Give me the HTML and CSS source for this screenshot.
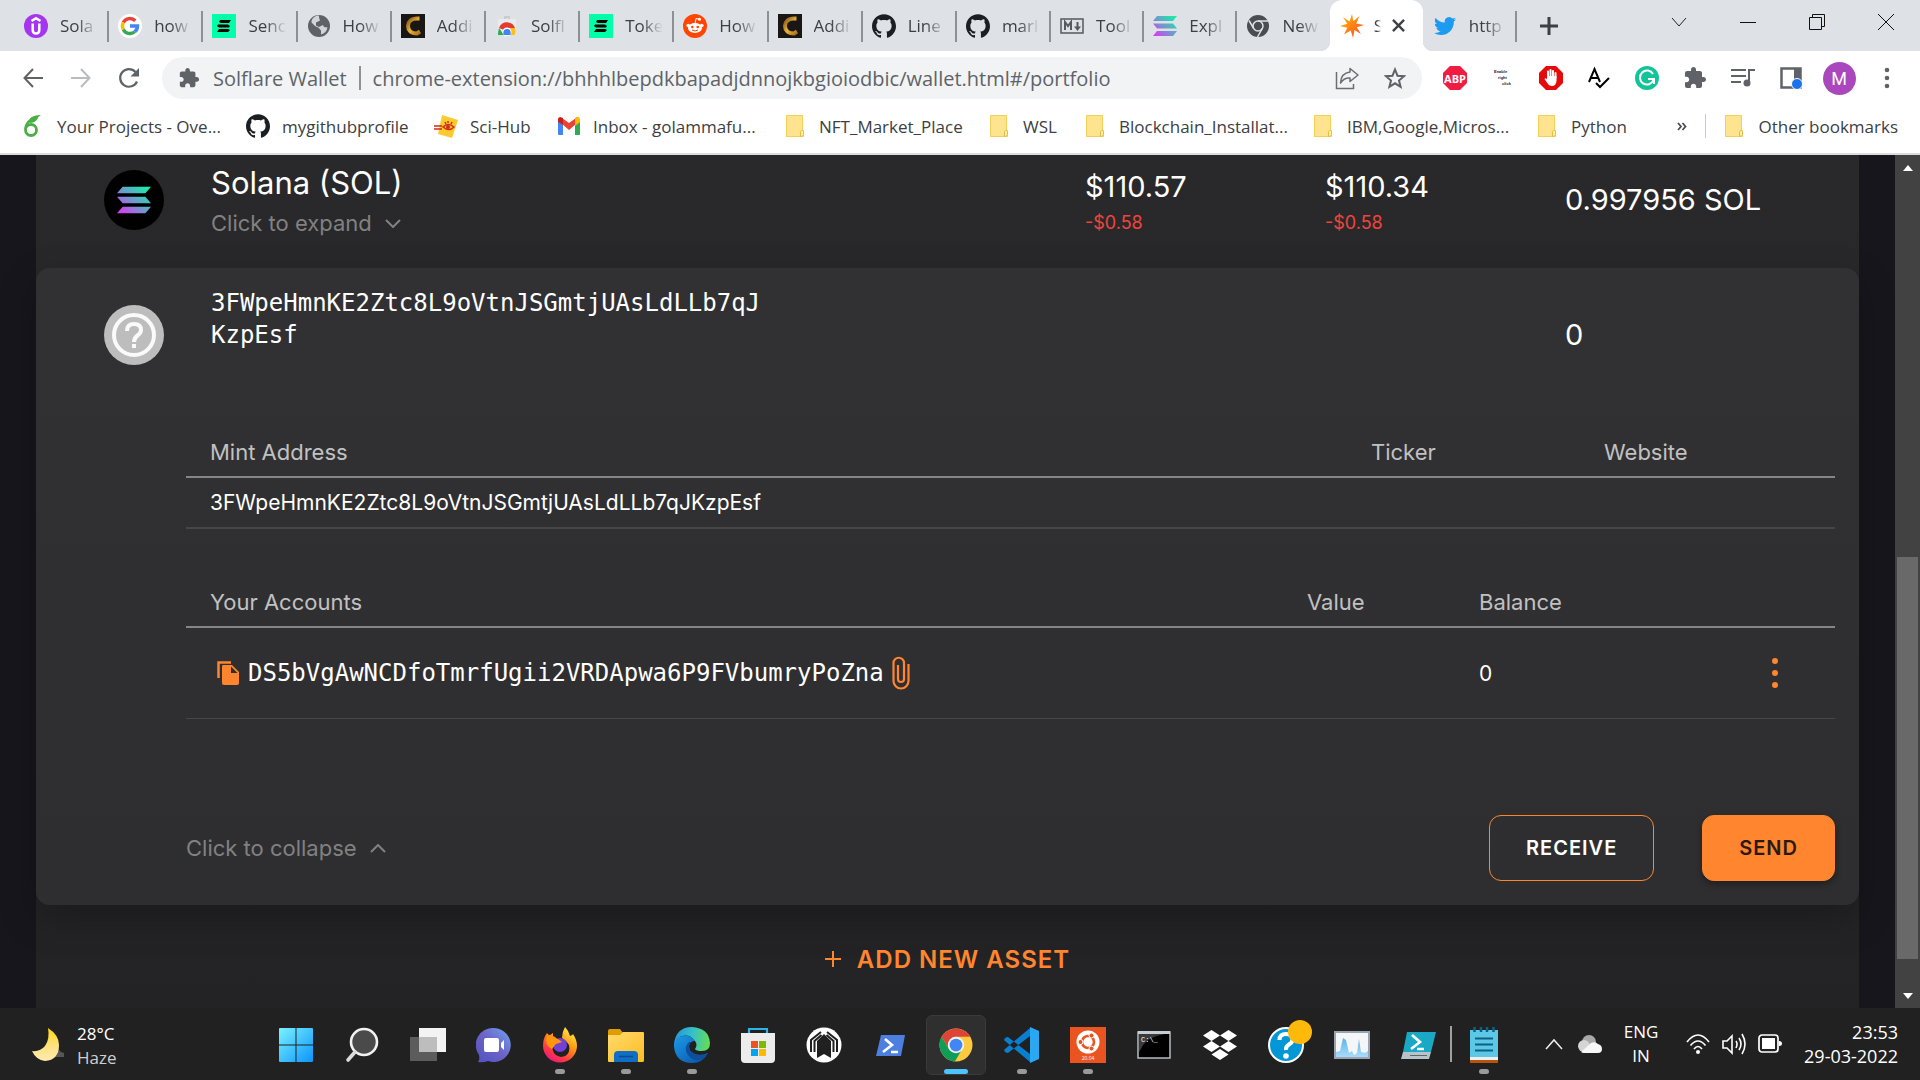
FILE: index.html
```html
<!DOCTYPE html>
<html lang="en">
<head>
<meta charset="utf-8">
<meta name="viewport" content="width=device-width, initial-scale=1">
<title>Solflare Wallet</title>
<link rel="stylesheet" href="styles.css">
</head>
<body>
<svg class="defs" aria-hidden="true">
  <defs>
    <linearGradient id="g-solu" gradientUnits="userSpaceOnUse" x1="3" y1="22" x2="21" y2="2"><stop offset="0" stop-color="#d93cf5"/><stop offset=".5" stop-color="#699fcb"/><stop offset="1" stop-color="#14f0a6"/></linearGradient>
    <linearGradient id="g-gold" x1="0" y1="0" x2="1" y2="1"><stop offset="0" stop-color="#8a5a14"/><stop offset=".5" stop-color="#e8b23c"/><stop offset="1" stop-color="#a8741c"/></linearGradient>
    <linearGradient id="g-win" x1="0" y1="0" x2="1" y2="1"><stop offset="0" stop-color="#7af2ff"/><stop offset="1" stop-color="#0b94fb"/></linearGradient>
    <linearGradient id="g-chat" x1="0" y1="1" x2="1" y2="0"><stop offset="0" stop-color="#4f52c4"/><stop offset=".5" stop-color="#6c62c4"/><stop offset="1" stop-color="#6fa4f4"/></linearGradient>
    <linearGradient id="g-fox" x1=".8" y1="0" x2=".2" y2="1"><stop offset="0" stop-color="#fff44f"/><stop offset=".4" stop-color="#ff980e"/><stop offset=".75" stop-color="#ff3647"/><stop offset="1" stop-color="#e31587"/></linearGradient>
    <linearGradient id="g-folder" x1="0" y1="0" x2="1" y2="1"><stop offset="0" stop-color="#ffda6e"/><stop offset="1" stop-color="#fdbd22"/></linearGradient>
    <linearGradient id="g-edge" x1="0" y1=".4" x2="1" y2=".5"><stop offset="0" stop-color="#2496d8"/><stop offset=".5" stop-color="#35c1c9"/><stop offset="1" stop-color="#66dd52"/></linearGradient>
    <linearGradient id="g-edge2" x1="0" y1="0" x2="1" y2="1"><stop offset="0" stop-color="#1a9ae8"/><stop offset="1" stop-color="#0c50a4"/></linearGradient>
    <linearGradient id="g-moon" x1="0" y1="0" x2="0" y2="1"><stop offset="0" stop-color="#fdd60c"/><stop offset=".5" stop-color="#fde27c"/><stop offset="1" stop-color="#ffe9b0"/></linearGradient>
    <linearGradient id="g-flare" x1="0" y1="0" x2="1" y2="1"><stop offset="0" stop-color="#ffc010"/><stop offset="1" stop-color="#fc4418"/></linearGradient>
    <linearGradient id="g-mon" x1="0" y1="0" x2="0" y2="1"><stop offset="0" stop-color="#5bb4ea"/><stop offset="1" stop-color="#a8dcfa"/></linearGradient>

    <symbol id="i-puzzle" viewBox="0 0 24 24"><path fill="#5f6368" d="M20.500 11H19V7c0-1.100-.9-2-2-2h-4V3.500C13 2.120 11.880 1 10.500 1S8 2.120 8 3.500V5H4c-1.100 0-1.990.9-1.990 2v3.800H3.500c1.490 0 2.700 1.210 2.700 2.700s-1.210 2.700-2.700 2.700H2V20c0 1.100.9 2 2 2h3.800v-1.500c0-1.490 1.210-2.700 2.700-2.700s2.700 1.210 2.700 2.700V22H17c1.100 0 2-.9 2-2v-4h1.500c1.380 0 2.500-1.120 2.500-2.500S21.880 11 20.500 11z"/></symbol>
    <symbol id="i-github" viewBox="0 0 24 24"><path fill="#1b1f23" d="M12 .297c-6.63 0-12 5.373-12 12 0 5.303 3.438 9.8 8.205 11.385.6.113.82-.258.82-.577 0-.285-.01-1.04-.015-2.04-3.338.724-4.042-1.61-4.042-1.61C4.422 18.07 3.633 17.7 3.633 17.7c-1.087-.744.084-.729.084-.729 1.205.084 1.838 1.236 1.838 1.236 1.07 1.835 2.809 1.305 3.495.998.108-.776.417-1.305.76-1.605-2.665-.3-5.466-1.332-5.466-5.93 0-1.31.465-2.38 1.235-3.22-.135-.303-.54-1.523.105-3.176 0 0 1.005-.322 3.3 1.23.96-.267 1.98-.399 3-.405 1.02.006 2.04.138 3 .405 2.28-1.552 3.285-1.23 3.285-1.23.645 1.653.24 2.873.12 3.176.765.84 1.23 1.91 1.23 3.22 0 4.61-2.805 5.625-5.475 5.92.42.36.81 1.096.81 2.22 0 1.606-.015 2.896-.015 3.286 0 .315.21.69.825.57C20.565 22.092 24 17.592 24 12.297c0-6.627-5.373-12-12-12"/></symbol>
    <symbol id="i-bars" viewBox="0 0 24 24"><path fill="#00ffa9" d="M0 0h24v24H0z"/><path d="M8 6h11l-2 3H9L7 8zM6 10.500h10l2 1.500-1 1.500H7L5 12zM7 15h9l2 1-2 2H5z"/></symbol>
    <symbol id="i-gold" viewBox="0 0 24 24"><path fill="#191613" d="M0 0h24v24H0z"/><path fill="none" stroke="url(#g-gold)" stroke-width="4" d="M18.500 4.500H16C10 4.500 7 8 7 12s3 7.500 9 7.500l3-2"/></symbol>
    <symbol id="i-solana" viewBox="0 0 24 24"><g fill="url(#g-solu)"><path d="M4 2h20l-4 5H0zM0 9.500h20l4 5H4zM4 17h20l-4 5H0z"/></g></symbol>
    <symbol id="i-folder" viewBox="0 0 24 24"><path fill="#ffe48f" stroke="#f3cf57" d="M3.500 1.500h16v15h1v6h-17z"/><path fill="#fff0b0" stroke="#e5bd3c" d="M17.500 22.500v-5q2-3 3 0v3q0 2-3 2z"/></symbol>
    <symbol id="i-chrome" viewBox="0 0 48 48"><circle cx="24" cy="24" r="22" fill="#fcca3f"/><path fill="#db4437" d="M5 13a22 22 0 0 1 38 0H24a11 11 0 0 0-10 6z"/><path fill="#0f9d58" d="M5 13a22 22 0 0 0 17.500 33l10-17a11 11 0 0 1-18 0z"/><path fill="#db4437" d="M5 13 14.500 29A11 11 0 0 1 24 13z"/><circle cx="24" cy="24" r="11" fill="#f1f1f1"/><circle cx="24" cy="24" r="8.500" fill="#4285f4"/></symbol>
  </defs>
</svg>

<header class="browser">
  <div class="strip">
    <nav class="tabs" aria-label="Tabs">
      <a class="tab" href="#t1"><svg class="fav" viewBox="0 0 24 24"><circle cx="12" cy="12" r="12" fill="#a435f0"/><path fill="none" stroke="#fff" stroke-width="2.500" d="M7.500 7 12 4.200 16.500 7M8.700 9.500V16q0 3.500 3.300 3.500t3.300-3.500V9.500"/></svg><span class="tab-text">Sola</span></a>
      <a class="tab" href="#t2"><svg class="fav" viewBox="0 0 24 24"><circle cx="12" cy="12" r="12" fill="#fff"/><g fill="none" stroke-width="3.400"><path stroke="#ea4335" d="M5.300 8.600a7.500 7.500 0 0 1 12-1.900"/><path stroke="#fbbc05" d="M5.300 15.400a7.500 7.500 0 0 1 0-6.800"/><path stroke="#34a853" d="M16.800 17.800a7.500 7.500 0 0 1-11.500-2.400"/><path stroke="#4285f4" d="M12 12h7.500a7.500 7.500 0 0 1-2.700 5.800"/></g></svg><span class="tab-text">how</span></a>
      <a class="tab" href="#t3"><svg class="fav"><use href="#i-bars"/></svg><span class="tab-text">Senc</span></a>
      <a class="tab" href="#t4"><svg class="fav" viewBox="0 0 24 24"><circle cx="12" cy="12" r="11" fill="#5f6368"/><path fill="#dee1e6" d="M12 3.500l1 3-4 2v3l3 1.500 4-2 1 2 3.500.5a9 9 0 0 1-6.500 7v-4l-2-2-4-1-4-4 1-4a9 9 0 0 1 7-4z" opacity=".9"/><path fill="#5f6368" d="M4 8l4 4 4 2 1 3 1 3-4 1-6-5z"/></svg><span class="tab-text">How</span></a>
      <a class="tab" href="#t5"><svg class="fav"><use href="#i-gold"/></svg><span class="tab-text">Addi</span></a>
      <a class="tab" href="#t6"><svg class="fav" viewBox="0 0 24 24"><path fill="#c9cccf" d="M9 2h6v3h-2V4h-2v1H9z"/><path fill="#e9eaec" d="M3 5h18v16H3z"/><path fill="#e33b2e" d="M4 14a8.500 8.500 0 0 1 16 0l-5 2H9z"/><path fill="#fbc116" d="M12 14h8q1 3 0 7h-8z"/><path fill="#2da94f" d="M4 14l5 7H3q0-4 1-7z"/><circle cx="12" cy="18" r="4.500" fill="#fff"/><path fill="#4285f4" d="M8.500 21q-1-6 3.500-6t3.500 6z"/></svg><span class="tab-text">Solfl</span></a>
      <a class="tab" href="#t7"><svg class="fav"><use href="#i-bars"/></svg><span class="tab-text">Toke</span></a>
      <a class="tab" href="#t8"><svg class="fav" viewBox="0 0 24 24"><circle cx="12" cy="12" r="12" fill="#ff4500"/><ellipse cx="12" cy="14" rx="7" ry="5" fill="#fff"/><circle cx="5.200" cy="11.500" r="1.800" fill="#fff"/><circle cx="18.800" cy="11.500" r="1.800" fill="#fff"/><circle cx="16.500" cy="5.300" r="1.500" fill="#fff"/><path fill="none" stroke="#fff" d="M12 9.500l1-5 3.500.8"/><circle cx="9.300" cy="13" r="1.300" fill="#ff4500"/><circle cx="14.700" cy="13" r="1.300" fill="#ff4500"/><path fill="none" stroke="#ff4500" d="M9 16q3 2 6 0"/></svg><span class="tab-text">How</span></a>
      <a class="tab" href="#t9"><svg class="fav"><use href="#i-gold"/></svg><span class="tab-text">Addi</span></a>
      <a class="tab" href="#t10"><svg class="fav"><use href="#i-github"/></svg><span class="tab-text">Line</span></a>
      <a class="tab" href="#t11"><svg class="fav"><use href="#i-github"/></svg><span class="tab-text">marl</span></a>
      <a class="tab" href="#t12"><svg class="fav" viewBox="0 0 24 24"><path fill="none" stroke="#57595c" stroke-width="1.500" d="M1 5h22v14H1z"/><path fill="none" stroke="#57595c" stroke-width="2" d="M5 16V8l3 4 3-4v8M17.500 8v6"/><path fill="#57595c" d="M14 12.500h7L17.500 17z"/></svg><span class="tab-text">Tool</span></a>
      <a class="tab" href="#t13"><svg class="fav"><use href="#i-solana"/></svg><span class="tab-text">Expl</span></a>
      <a class="tab tab-plain" href="#t14"><svg class="fav" viewBox="0 0 24 24"><circle cx="12" cy="12" r="11" fill="#4a4d51"/><g fill="none" stroke="#dee1e6" stroke-width="1.500"><circle cx="12" cy="12" r="5"/><path d="M12 7h10M7.700 14.500 3 6.500M16.300 14.500 11.500 23"/></g></svg><span class="tab-text">New</span></a>
      <a class="tab tab-active" href="#portfolio" aria-current="page"><svg class="fav" viewBox="0 0 24 24"><path fill="url(#g-flare)" d="M12 0l1.400 7.200L19.500 2l-3.300 7.600L24 11l-7.300 2.300L21 20l-6.500-4L13 24l-2.300-7.500L4 20.500l3.300-6.700L0 12l7.200-2.200L3 3l6.500 4.500z"/></svg><span class="tab-text tab-sliver">S</span><svg class="tab-close" viewBox="0 0 14 14"><path fill="none" stroke="#3c4043" stroke-width="2.500" d="M1 1l12 12M13 1 1 13"/></svg></a>
      <a class="tab" href="#t16"><svg class="fav" viewBox="0 0 24 24"><path fill="#1d9bf0" transform="translate(1 1) scale(.92)" d="M23.953 4.570a10 10 0 01-2.825.775 4.958 4.958 0 002.163-2.723c-.951.555-2.005.959-3.127 1.184a4.920 4.920 0 00-8.384 4.482C7.690 8.095 4.067 6.130 1.640 3.162a4.822 4.822 0 00-.666 2.475c0 1.710.870 3.213 2.188 4.096a4.904 4.904 0 01-2.228-.616v.060a4.923 4.923 0 003.946 4.827 4.996 4.996 0 01-2.212.085 4.936 4.936 0 004.604 3.417 9.867 9.867 0 01-6.102 2.105c-.390 0-.779-.023-1.170-.067a13.995 13.995 0 007.557 2.209c9.053 0 13.998-7.496 13.998-13.985 0-.210 0-.420-.015-.630A9.935 9.935 0 0024 4.590z"/></svg><span class="tab-text">http</span></a>
    </nav>
    <button class="new-tab" aria-label="New tab"><svg width="18" height="18" viewBox="0 0 18 18"><path stroke="#3c4043" stroke-width="3" d="M9 0v18M0 9h18"/></svg></button>
    <div class="window-controls">
      <button aria-label="Search tabs"><svg width="16" height="10" viewBox="0 0 16 10"><path fill="none" stroke="#222" d="M1 1l7 8 7-8"/></svg></button>
      <button aria-label="Minimize"><svg width="16" height="10" viewBox="0 0 16 10"><path stroke="#111" d="M0 5.500h16"/></svg></button>
      <button aria-label="Restore"><svg width="16" height="16" viewBox="0 0 16 16"><path fill="none" stroke="#111" d="M.5 3.500h12v12H.5zM3.500 3.500v-3h12v12h-3"/></svg></button>
      <button aria-label="Close"><svg width="16" height="16" viewBox="0 0 16 16"><path stroke="#111" d="M0 0l16 16M16 0 0 16"/></svg></button>
    </div>
  </div>

  <div class="toolbar">
    <div class="tool-group">
      <button aria-label="Back"><svg width="20" height="20" viewBox="0 0 20 20"><path fill="none" stroke="#5f6368" stroke-width="2" d="M20 10H2M10 1 1.500 10l8.500 9"/></svg></button>
      <button aria-label="Forward"><svg width="20" height="20" viewBox="0 0 20 20"><path fill="none" stroke="#babcbe" stroke-width="2" d="M0 10h18M10 1l8.500 9-8.500 9"/></svg></button>
      <button aria-label="Reload"><svg width="22" height="22" viewBox="0 0 22 22"><path fill="none" stroke="#5f6368" stroke-width="2.200" d="M19 14.500a8.800 8.800 0 1 1-1.500-9.500"/><path fill="#5f6368" d="M21 1v8.500h-8.500z"/></svg></button>
    </div>
    <div class="omnibox">
      <svg class="omni-icon"><use href="#i-puzzle"/></svg>
      <label class="omni-label" for="url">Solflare Wallet</label>
      <span class="omni-rule"></span>
      <input class="omni-input" id="url" type="text" value="chrome-extension://bhhhlbepdkbapadjdnnojkbgioiodbic/wallet.html#/portfolio">
      <button aria-label="Share"><svg width="24" height="24" viewBox="0 0 24 24"><path fill="none" stroke="#6b6f73" stroke-width="1.500" d="M1.500 6v16.500h17V18"/><path fill="none" stroke="#6b6f73" stroke-width="1.500" stroke-linejoin="round" d="M15 2.500 23 9l-8 6.500V12q-6-.5-9.500 5Q6 7 15 6z"/></svg></button>
      <button aria-label="Bookmark this page"><svg width="22" height="22" viewBox="0 0 22 22"><path fill="none" stroke="#5f6368" stroke-width="2" d="M11 2.500l2.500 6.200 6.500.5-5 4.300 1.600 6.300L11 16.300l-5.600 3.500L7 13.500 2 9.200l6.500-.5z"/></svg></button>
    </div>
    <div class="tool-group">
      <button class="abp" aria-label="Adblock Plus"><span>ABP</span></button>
      <button class="erc" aria-label="Enable right click"><span>Enable</span><span>right</span><span>click</span></button>
      <button aria-label="AdBlock"><svg width="24" height="24" viewBox="0 0 24 24"><path fill="#e40b0b" d="M7 0h10l7 7v10l-7 7H7l-7-7V7z"/><path fill="none" stroke="#fff" stroke-width="2" stroke-linecap="round" d="M9 12V5.500M11.500 11V4M14 11V5M16.500 12V7"/><path fill="#fff" d="M8 10h9.500v5q-.5 5-4.500 5-3 0-4-2l-3.500-5q1-1.500 2.500.5z"/></svg></button>
      <button aria-label="Spell check"><svg width="24" height="24" viewBox="0 0 24 24"><path fill="none" stroke="#000" stroke-width="2" d="M2 16 7.500 3 13 16M4 12h7M9 17l4 4 9-9"/></svg></button>
      <button aria-label="Grammarly"><svg width="24" height="24" viewBox="0 0 24 24"><circle cx="12" cy="12" r="12" fill="#15c39a"/><path fill="none" stroke="#fff" stroke-width="2" d="M18 8a7 7 0 1 0 .5 6M13 13h6v5"/></svg></button>
      <button aria-label="Extensions"><svg width="24" height="24"><use href="#i-puzzle"/></svg></button>
      <button aria-label="Media"><svg width="24" height="20" viewBox="0 0 24 20"><path fill="none" stroke="#5f6368" stroke-width="2" d="M0 2h15M0 8h15M0 14h10M18 15V2h6"/><circle cx="16" cy="15" r="3.500" fill="#5f6368"/></svg></button>
      <button aria-label="Side panel"><svg width="22" height="22" viewBox="0 0 22 22"><path fill="none" stroke="#5f6368" stroke-width="2.500" d="M1.500 1.500h19v19h-19z"/><path fill="#5f6368" d="M14 1h7v12h-7z"/><circle cx="17" cy="17" r="5.500" fill="#1a73e8" stroke="#fff"/></svg></button>
      <button aria-label="Profile"><span class="avatar">M</span></button>
      <button aria-label="Menu"><svg width="6" height="22" viewBox="0 0 6 22"><g fill="#5f6368"><circle cx="3" cy="3" r="2.300"/><circle cx="3" cy="11" r="2.300"/><circle cx="3" cy="19" r="2.300"/></g></svg></button>
    </div>
  </div>

  <nav class="bookmarks" aria-label="Bookmarks">
    <a href="#b1"><svg class="fav" viewBox="0 0 24 24"><circle cx="10" cy="16" r="5.500" fill="none" stroke="#4caf46" stroke-width="2.800"/><path fill="none" stroke="#4caf46" stroke-width="2.600" d="M4.500 15Q5 7 14 3.500"/><path fill="#4caf46" d="M9 4.500Q12 1 20 1q-3 1.500-3.500 4Q14 9 8.500 9z"/></svg><span>Your Projects - Ove...</span></a>
    <a href="#b2"><svg class="fav"><use href="#i-github"/></svg><span>mygithubprofile</span></a>
    <a href="#b3"><svg class="fav" viewBox="0 0 24 24"><path fill="#fbcb2e" d="M8 1l16 5-6 18-14-4z"/><path fill="none" stroke="#d42a1c" stroke-width="1.500" d="M0 12h8M0 15h8M9 13q5-5 11 0-5 5-11 0zM11 8l1 2M14 7v2M18 8l-1 2"/><circle cx="14" cy="13" r="2" fill="#d42a1c"/></svg><span>Sci-Hub</span></a>
    <a href="#b4"><svg class="fav" viewBox="0 0 24 24"><path fill="#4285f4" d="M1 7l5 4v10H2q-1 0-1-1z"/><path fill="#34a853" d="M23 7l-5 4v10h4q1 0 1-1z"/><path fill="#ea4335" d="M1 7V5q1-3 4-1l7 5 7-5v6l-7 6-7-6z"/><path fill="#fbbc04" d="M18 4q4-3 5 1v3l-5 4z"/><path fill="#c5221f" d="M1 5q1-3 5-1v7L1 8z"/></svg><span>Inbox - golammafu...</span></a>
    <a href="#b5"><svg class="fav"><use href="#i-folder"/></svg><span>NFT_Market_Place</span></a>
    <a href="#b6"><svg class="fav"><use href="#i-folder"/></svg><span>WSL</span></a>
    <a href="#b7"><svg class="fav"><use href="#i-folder"/></svg><span>Blockchain_Installat...</span></a>
    <a href="#b8"><svg class="fav"><use href="#i-folder"/></svg><span>IBM,Google,Micros...</span></a>
    <a href="#b9"><svg class="fav"><use href="#i-folder"/></svg><span>Python</span></a>
    <button class="more" aria-label="More bookmarks"><svg width="10" height="9" viewBox="0 0 10 9"><path fill="none" stroke="#4a4d51" stroke-width="1.800" d="M1 1l3 3.500L1 8M5.500 1l3 3.500-3 3.500"/></svg></button>
    <a class="other" href="#b10"><svg class="fav"><use href="#i-folder"/></svg><span>Other bookmarks</span></a>
  </nav>
</header>

<div class="viewport">
  <main class="page">
    <section class="asset">
      <svg class="coin" viewBox="0 0 60 60"><circle cx="30" cy="30" r="30"/><svg x="13" y="14" width="34" height="32" viewBox="0 0 24 24" preserveAspectRatio="none"><use href="#i-solana"/></svg></svg>
      <div class="stack">
        <h2 class="name">Solana (SOL)</h2>
        <button class="toggle">Click to expand<svg width="16" height="9" viewBox="0 0 16 9"><path fill="none" stroke="currentColor" stroke-width="2" d="M1 1l7 7 7-7"/></svg></button>
      </div>
      <div class="amount stack">$110.57<small>-$0.58</small></div>
      <div class="amount stack">$110.34<small>-$0.58</small></div>
      <div class="amount">0.997956 SOL</div>
    </section>

    <section class="card">
      <div class="asset asset-open">
        <svg class="coin" viewBox="0 0 60 60"><circle cx="30" cy="30" r="30" fill="#bdbdbd"/><circle cx="30" cy="30" r="20" fill="none" stroke="#fafafa" stroke-width="4"/><path fill="none" stroke="#fafafa" stroke-width="4" d="M23 26q0-7 7-7t7 6q0 3-3.500 5.500T30 37"/><path fill="#fafafa" d="M28 39h4v4h-4z"/></svg>
        <h2 class="address">3FWpeHmnKE2Ztc8L9oVtnJSGmtjUAsLdLLb7qJKzpEsf</h2>
        <div class="amount balance">0</div>
      </div>

      <div class="details">
        <table>
          <colgroup><col><col class="c-ticker"><col class="c-website"></colgroup>
          <thead><tr><th scope="col">Mint Address</th><th scope="col">Ticker</th><th scope="col">Website</th></tr></thead>
          <tbody><tr><td>3FWpeHmnKE2Ztc8L9oVtnJSGmtjUAsLdLLb7qJKzpEsf</td><td></td><td></td></tr></tbody>
        </table>
        <table class="accounts">
          <colgroup><col><col class="c-value"><col class="c-balance"><col class="c-menu"></colgroup>
          <thead><tr><th scope="col">Your Accounts</th><th scope="col">Value</th><th scope="col">Balance</th><th></th></tr></thead>
          <tbody><tr>
            <td><div class="account">
              <button aria-label="Copy address"><svg width="24" height="26" viewBox="0 0 24 26"><path fill="none" stroke="#ff852e" stroke-width="2.500" d="M2.500 18V2.500H15"/><path fill="#ff852e" d="M7 5h9l7 7v11q0 2-2 2H8q-2 0-2-2V7q0-2 1-2z"/><path fill="#2f2f31" d="M15 6.500V13h6.500z"/></svg></button>
              <span>DS5bVgAwNCDfoTmrfUgii2VRDApwa6P9FVbumryPoZna</span>
              <svg width="18" height="34" viewBox="0 0 18 34"><path fill="none" stroke="#ff852e" stroke-width="2.200" d="M16.500 8v17a7.500 7.500 0 0 1-15 0V7a5.200 5.200 0 0 1 10.500 0v16a3 3 0 0 1-6 0V9"/></svg>
            </div></td>
            <td></td>
            <td>0</td>
            <td class="menu-cell"><button aria-label="Account menu"><svg width="6" height="32" viewBox="0 0 6 32"><g fill="#ff852e"><circle cx="3" cy="4" r="3"/><circle cx="3" cy="16" r="3"/><circle cx="3" cy="28" r="3"/></g></svg></button></td>
          </tr></tbody>
        </table>
        <div class="actions">
          <button class="toggle">Click to collapse<svg width="16" height="9" viewBox="0 0 16 9"><path fill="none" stroke="currentColor" stroke-width="2" d="M1 8l7-7 7 7"/></svg></button>
          <button class="btn btn-outline">RECEIVE</button>
          <button class="btn btn-solid">SEND</button>
        </div>
      </div>
    </section>

    <button class="add"><svg width="16" height="18" viewBox="0 0 16 18"><path stroke="#ff852e" stroke-width="2" d="M8 1v16M0 9h16"/></svg>ADD NEW ASSET</button>
  </main>
  <div class="scrollbar" aria-hidden="true">
    <svg width="10" height="6" viewBox="0 0 10 6"><path fill="#fff" d="M5 0l5 6H0z"/></svg>
    <span class="track"><span class="thumb"></span></span>
    <svg width="10" height="6" viewBox="0 0 10 6"><path fill="#fff" d="M5 6l5-6H0z"/></svg>
  </div>
</div>

<footer class="taskbar">
  <button class="weather">
    <svg width="34" height="36" viewBox="0 0 34 36"><path fill="#6d6d6d" d="M12 31q0-4 5-4 2-8 9-5l4 4 3 1v4z" opacity=".7"/><path fill="url(#g-moon)" d="M17 2Q28 9 28 19q0 15-14 16Q5 34 1 25q8 1 13-5 5-7 3-18z"/></svg>
    <span class="weather-text"><span>28°C</span><span class="dim">Haze</span></span>
  </button>
  <nav class="apps" aria-label="Taskbar apps">
    <button aria-label="Start"><svg viewBox="0 0 36 36"><path fill="url(#g-win)" d="M2 1h15.500v16.500H1V2q0-1 1-1zM18.500 1H34q1 0 1 1v15.500H18.500zM1 18.500h16.500V35H2q-1 0-1-1zM18.500 18.500H35V34q0 1-1 1H18.500z"/></svg></button>
    <button aria-label="Search"><svg viewBox="0 0 36 36"><circle cx="20" cy="15" r="13" fill="#4a4a4a" stroke="#f2f2f2" stroke-width="2.600"/><path stroke="#d8dcdf" stroke-width="3.600" stroke-linecap="round" d="M11 25l-7 8"/></svg></button>
    <button aria-label="Task view"><svg viewBox="0 0 36 36"><path fill="#5c5c5c" d="M0 10h27v24H0z"/><path fill="#f3f3f3" d="M9 1h27v24H9z"/><path fill="#bdbdbd" d="M9 10h18v15H9z"/></svg></button>
    <button aria-label="Chat"><svg viewBox="0 0 36 36"><path fill="url(#g-chat)" d="M18 1a17 17 0 1 1-6 33q-5 2-10 1 2-2 1-7A17 17 0 0 1 18 1z"/><path fill="#fff" d="M8 13q0-2 2-2h11q2 0 2 2v10q0 2-2 2H10q-2 0-2-2zM25 16l3-3v10l-3-3z"/></svg></button>
    <button class="open" aria-label="Firefox"><svg viewBox="0 0 36 36"><path fill="url(#g-fox)" d="M23 0q4 4 5 9 3-1 3-2 4 6 4 12a17 16.500 0 0 1-34 0Q1 11 5 6q1 2 3 2l3-2v5q-2 2 0 4-3 13 8 15 10-1 8-12-2-4-7-7 0-6 3-11z"/><circle cx="18" cy="18" r="7" fill="#7240d6"/><path fill="#ff980e" d="M5 9q7-1 9 2 4 2 6 4-3 1-6 2-2 2-4 5-8-4-5-13z"/></svg></button>
    <button class="open" aria-label="File Explorer"><svg viewBox="0 0 36 36"><path fill="#e09d00" d="M0 4q0-2 2-2h10l3 4v6H0z"/><path fill="url(#g-folder)" d="M0 8h12l3-3h20q1 0 1 1v27q0 2-1 2H1q-1 0-1-1z"/><path fill="#0f6fc5" d="M6 35V28q0-4 4-4h16q4 0 4 4v7z"/><path stroke="#0a4b96" stroke-width="1.500" d="M11 29.500h14"/></svg></button>
    <button class="open" aria-label="Edge"><svg viewBox="0 0 36 36"><path fill="url(#g-edge2)" d="M0 17q1-7 9-8 8-1 12 5-5 0-6 5 0 8 8 9 5 1 11-2-5 10-16 10Q2 36 0 20z"/><path fill="#0c4f9d" d="M15 15q-6 6-1 13 6 8 15 4l5-6q-10 4-16-1-6-5-1-10z"/><path fill="url(#g-edge)" d="M0 17Q2 0 18 0q17 1 18 16 0 8-8 8-6 0-7-2 3-4 0-8-5-7-13-5-6 2-8 8z"/></svg></button>
    <button aria-label="Microsoft Store"><svg viewBox="0 0 36 36"><path fill="none" stroke="#2bb3ee" stroke-width="2.200" d="M9 8V2h18v6"/><path fill="#ececec" d="M1 6h34v26q0 4-4 4H5q-4 0-4-4z"/><path fill="#f25022" d="M11 14h7v7h-7z"/><path fill="#7fba00" d="M19 14h7v7h-7z"/><path fill="#00a4ef" d="M11 22h7v7h-7z"/><path fill="#ffb900" d="M19 22h7v7h-7z"/></svg></button>
    <button aria-label="Notes"><svg viewBox="0 0 36 36"><circle cx="18" cy="18" r="17.500" fill="#fff"/><g fill="none" stroke="#202020" stroke-width="2"><path d="M5 25V13l10-8M31 25V13L21 5M8.500 25V14l7-6M27.500 25V14l-7-6"/></g><path fill="#202020" d="M11 31V14l7-7 7 7v17l-7-4z"/></svg></button>
    <button aria-label="PowerShell"><svg viewBox="0 0 36 36"><path fill="#4c7fe0" d="M9 8h24l-4 21H4z"/><path fill="none" stroke="#fff" stroke-width="2.600" d="M13 12l7 6-9 7M19 25h7"/></svg></button>
    <button class="current" aria-label="Chrome"><svg><use href="#i-chrome"/></svg></button>
    <button class="open" aria-label="Visual Studio Code"><svg viewBox="0 0 36 36"><path fill="#0a7fd0" d="M0 13q1-3 4-3l22 17v8L1 14zM0 23q1 3 4 3L26 9V1L1 22z"/><path fill="#2aa8f2" d="M26 0l9 4v28l-9 4z"/></svg></button>
    <button class="open" aria-label="Ubuntu"><svg viewBox="0 0 36 36"><path fill="#e95420" d="M0 0h36v36H0z"/><circle cx="18" cy="15" r="11.500" fill="#fff"/><circle cx="18" cy="15" r="6" fill="none" stroke="#e95420" stroke-width="2.600"/><g fill="#e95420" stroke="#fff"><circle cx="10.500" cy="15" r="2.500"/><circle cx="21.500" cy="8.500" r="2.500"/><circle cx="21.500" cy="21.500" r="2.500"/></g><text class="ubuntu-text" x="18" y="33" text-anchor="middle">20.04</text></svg></button>
    <button aria-label="Command Prompt"><svg viewBox="0 0 36 36"><path fill="#000" stroke="#b5bcc2" stroke-width="1.500" d="M2 5h32v26H2z"/><path fill="#c5ccd2" d="M2 4h32v3H2z"/><path fill="#3a3a3a" d="M3 7h26Q10 10 5 22l-2 3z"/><text class="cmd-text" x="5" y="15">C:\_</text></svg></button>
    <button aria-label="Dropbox"><svg viewBox="0 0 36 36"><path fill="#fff" d="M9.500 3l8.500 5.500L9.500 14 1 8.500zM26.500 3 35 8.500 26.500 14 18 8.500zM9.500 14l8.500 5.500L9.500 25 1 19.500zM26.500 14l8.500 5.500-8.500 5.500-8.500-5.500zM18 22l8.500 5.500L18 33l-8.500-5.500z"/></svg></button>
    <button class="alert" aria-label="Get Help"><svg viewBox="0 0 36 36"><circle cx="18" cy="18" r="17" fill="#0497d8" stroke="#fff" stroke-width="2"/><path fill="none" stroke="#fff" stroke-width="4" d="M11.500 13q0-6 6.500-6t6.500 5.500q0 3-3.500 5T18 23"/><circle cx="18" cy="29" r="2.800" fill="#fff"/></svg></button>
    <button aria-label="Resource Monitor"><svg viewBox="0 0 36 36"><path fill="#f4f6f8" stroke="#9aa4b0" stroke-width="2" d="M1 5h34v26H1z"/><path fill="url(#g-mon)" d="M2 25l4-1 3-13 3 2 3 13 3-2 2 4 3-2 2-14 2 13 4 1 3-2v6H2z"/></svg></button>
    <button aria-label="PowerShell ISE"><svg viewBox="0 0 36 36"><path fill="#19a9c4" d="M7 5h29l-5 20H3z"/><path fill="#b9c4c9" d="M3 25h28l-2 7H1z"/><path fill="none" stroke="#fff" stroke-width="2.600" d="M12 8l8 7-9 7M17 22h7"/><path stroke="#5c686d" d="M10 28.500h17"/></svg></button>
    <span class="divider"></span>
    <button class="open" aria-label="Notepad"><svg viewBox="0 0 36 36"><path fill="#5cc8e6" d="M4 3h28v27H4z"/><path fill="#eee" d="M4 30h28v3H4z"/><path fill="#b6540c" d="M4 33h28v3H4z"/><path stroke="#0e5f86" stroke-width="2" d="M9 11.500h18M9 17.500h18M9 23.500h18"/><path stroke="#0e5f86" stroke-width="2.500" d="M8.500 0v5M15 0v5M21 0v5M27.500 0v5"/></svg></button>
  </nav>
  <div class="tray">
    <button aria-label="Show hidden icons"><svg width="18" height="12" viewBox="0 0 18 12"><path fill="none" stroke="#eee" stroke-width="1.500" d="M1 11l8-9 8 9"/></svg></button>
    <button aria-label="OneDrive"><svg width="26" height="20" viewBox="0 0 26 20"><circle cx="12" cy="8" r="7" fill="#a9a9a9"/><circle cx="7" cy="12" r="6" fill="#d5d5d5"/><path fill="#f7f7f7" d="M4 18l10-9q4-2 7 1 4 1 4 5 0 4-4 4H7q-2 0-3-1z"/></svg></button>
    <button class="lang"><span>ENG</span><span>IN</span></button>
    <button aria-label="Wi-Fi"><svg width="24" height="22" viewBox="0 0 24 22"><g fill="none" stroke="#fff" stroke-width="1.700"><path d="M1 9q11-14 22 0M4.500 12.500q7.500-9 15 0M8 16q4-5 8 0"/></g><circle cx="12" cy="19" r="2" fill="#fff"/></svg></button>
    <button aria-label="Volume"><svg width="24" height="24" viewBox="0 0 24 24"><g fill="none" stroke="#fff" stroke-width="1.600"><path d="M1 9h4l5-5v17l-5-5H1zM14 9q2 3 0 7M17 6q4 6 0 12M20 2q6 10 0 20"/></g></svg></button>
    <button aria-label="Battery"><svg width="24" height="20" viewBox="0 0 24 20"><rect x="1" y="1" width="19" height="17" rx="3" fill="none" stroke="#fff" stroke-width="1.700"/><path fill="#fff" d="M4 4h13v11H4zM21 7q3 0 3 2.500T21 12z"/></svg></button>
    <button class="clock"><span>23:53</span><span>29-03-2022</span></button>
  </div>
</footer>
</body>
</html>
```
FILE: styles.css
```css
:root {
  --chrome-font: "Open Sans", "Noto Sans", sans-serif;
  --page-font: "Inter", "Open Sans", sans-serif;
  --mono-font: "DejaVu Sans Mono", "Liberation Mono", monospace;
  --orange: #ff852e;
}

* { box-sizing: border-box; }

body {
  display: flex;
  flex-direction: column;
  height: 100vh;
  margin: 0;
  overflow: hidden;
  background: #17161c;
  font-family: var(--chrome-font);
}

button {
  padding: 0;
  border: 0;
  background: none;
  color: inherit;
  font: inherit;
}

a { color: inherit; text-decoration: none; }
svg { display: block; flex: none; }
.defs { position: absolute; width: 0; height: 0; }

/* Browser frame */
.browser {
  background: #fff;
  color: #3c4043;
  font-size: 17px;
  border-bottom: 2px solid #dadcdd;
}

.strip {
  display: flex;
  height: 51px;
  padding-left: 14px;
  background: #dee1e6;
}

.tabs {
  display: grid;
  grid-template-columns: repeat(11, 94fr) repeat(5, 93fr);
  flex: 0 1 1502px;
  min-width: 0;
}

.tab {
  position: relative;
  display: flex;
  align-items: center;
  gap: 12px;
  min-width: 0;
  padding: 0 6px 0 10px;
}

.tab::after {
  content: "";
  position: absolute;
  top: 11px;
  right: -1px;
  width: 2px;
  height: 31px;
  background: #8d9095;
}

.tab-plain::after, .tab-active::after { display: none; }
.fav { width: 24px; height: 24px; }

.tab-text {
  flex: 1;
  min-width: 0;
  overflow: hidden;
  white-space: nowrap;
  mask-image: linear-gradient(to right, #000 40%, transparent 90%);
}

.tab-active {
  gap: 10px;
  border-radius: 12px 12px 0 0;
  background: #fff;
}

.tab-active::before {
  content: "";
  position: absolute;
  bottom: 0;
  left: -9px;
  right: -9px;
  height: 9px;
  background:
    radial-gradient(circle at 0 0, transparent 9px, #fff 9px) left / 9px 9px no-repeat,
    radial-gradient(circle at 9px 0, transparent 9px, #fff 9px) right / 9px 9px no-repeat;
}

.tab-sliver { flex: 0 0 8px; }
.tab-close { width: 13px; height: 13px; }

.new-tab { width: 66px; display: grid; place-items: center; }

.window-controls { display: flex; height: 44px; margin-left: auto; }
.window-controls button { width: 69px; display: grid; place-items: center; }

.toolbar { display: flex; gap: 9px; padding: 6px 9px 0; }
.tool-group { display: flex; height: 42px; }
.toolbar button { width: 48px; display: grid; place-items: center; }

.omnibox {
  display: flex;
  flex: 1;
  min-width: 0;
  height: 42px;
  padding: 0 3px 0 16px;
  border-radius: 21px;
  background: #f1f3f4;
  color: #5f6368;
  font-size: 20px;
}

.omni-icon { width: 22px; height: 22px; align-self: center; }
.omni-label { align-self: center; margin-left: 13px; white-space: nowrap; }
.omni-rule { width: 2px; height: 24px; margin: 9px 12px; background: #8d9095; }

.omni-input {
  flex: 1;
  min-width: 0;
  padding: 0;
  border: 0;
  outline: 0;
  background: none;
  color: inherit;
  font: inherit;
}

.abp span {
  display: grid;
  place-items: center;
  width: 24px;
  height: 24px;
  background: #f01c42;
  clip-path: polygon(29% 0, 71% 0, 100% 29%, 100% 71%, 71% 100%, 29% 100%, 0 71%, 0 29%);
  color: #fff;
  font-size: 11px;
  font-weight: 700;
}

.toolbar .erc {
  align-content: center;
  justify-items: start;
  padding-left: 15px;
  color: #222;
  font-family: "Liberation Sans", sans-serif;
  font-size: 4px;
  font-weight: 700;
  line-height: 6px;
}

.erc span:nth-child(2) { padding-left: 4px; }
.erc span:nth-child(3) { padding-left: 8px; }

.avatar {
  display: grid;
  place-items: center;
  width: 33px;
  height: 33px;
  border-radius: 50%;
  background: #ab47bc;
  color: #fff;
  font-family: "Roboto", sans-serif;
  font-size: 18px;
}

.bookmarks {
  display: grid;
  grid-template-columns: 225px 188px 123px 226px 204px 96px 228px 224px 120px 1fr auto;
  height: 54px;
  padding: 0 22px 0 21px;
  align-items: center;
}

.bookmarks a { display: flex; align-items: center; gap: 12px; white-space: nowrap; }
.more { justify-self: end; margin-right: 18px; }
.bookmarks .other { height: 24px; padding-left: 16px; border-left: 1px solid #c8cacd; }

/* Wallet page */
.viewport { display: flex; flex: 1; min-height: 0; overflow: hidden; }

.page {
  flex: 1;
  min-width: 0;
  margin: 0 36px;
  background: linear-gradient(#29292b, #232325);
  color: #fff;
  font-family: var(--page-font);
  font-size: 21px;
}

.asset {
  display: grid;
  grid-template-columns: 107px 1fr 240px 240px 294px;
  align-items: center;
  height: 113px;
  padding: 0 0 23px 68px;
}

.coin { width: 60px; height: 60px; }
h2 { margin: 0; font-weight: 400; }
.name { font-size: 31px; line-height: 40px; }
.stack { padding-top: 6px; }

.toggle {
  display: flex;
  align-items: center;
  gap: 13px;
  color: #818182;
  font-size: 22px;
  line-height: 40px;
}

.amount { font-size: 29px; line-height: 40px; }
.amount small { display: block; color: #f0443c; font-size: 18px; line-height: 32px; }

.card {
  border-radius: 14px;
  background: linear-gradient(#313133, #2e2e30);
  box-shadow: 0 14px 36px rgba(0, 0, 0, 0.25);
  padding-bottom: 24px;
}

.asset-open { height: 134px; padding: 0 0 0 68px; }
.balance { grid-column: 5; }

.address {
  max-width: 560px;
  height: 96px;
  font-family: var(--mono-font);
  font-size: 24px;
  line-height: 32px;
  word-break: break-all;
}

.details { padding: 25px 24px 0 150px; }

table {
  width: 100%;
  border-spacing: 0;
  table-layout: fixed;
}

th, td { height: 51px; padding: 0 24px; text-align: left; font-weight: 400; }
th { border-bottom: 2px solid #858586; color: #c1c1c2; font-size: 22px; }
td { border-bottom: 2px solid #464648; }

.accounts { margin-top: 48px; }
.accounts td { height: 91px; border-bottom-width: 1px; }
.c-ticker { width: 233px; }
.c-website { width: 255px; }
.c-value { width: 172px; }
.c-balance { width: 260px; }
.c-menu { width: 120px; }
.menu-cell button { display: block; margin: 0 auto; }

.account {
  display: flex;
  align-items: center;
  gap: 8px;
  padding-left: 6px;
  font-family: var(--mono-font);
  font-size: 24px;
  line-height: 32px;
}

.actions { display: flex; align-items: center; gap: 48px; margin-top: 96px; }
.actions .toggle { margin-right: auto; }

.btn {
  height: 66px;
  padding: 0 36px;
  border: 1px solid var(--orange);
  border-radius: 12px;
  font-size: 20px;
  font-weight: 600;
  letter-spacing: 1px;
}

.btn-solid {
  background: var(--orange);
  color: #29190e;
  box-shadow: 0 3px 6px rgba(0, 0, 0, 0.35);
}

.add {
  display: flex;
  align-items: center;
  gap: 16px;
  height: 66px;
  margin: 21px auto 0;
  color: var(--orange);
  font-size: 24px;
  font-weight: 600;
  letter-spacing: 1px;
}

.scrollbar {
  display: flex;
  flex-direction: column;
  align-items: center;
  flex: none;
  width: 25px;
  padding: 10px 0 9px;
  background: #424242;
}

.track { flex: 1; display: flex; flex-direction: column; justify-content: flex-end; padding: 0 0 34px; }
.thumb { width: 21px; height: 51%; background: #696969; }

/* Taskbar */
.taskbar {
  display: flex;
  flex: none;
  height: 72px;
  background: #212121;
  color: #fff;
  font-size: 17px;
  line-height: 24px;
}

.weather { display: flex; align-items: center; gap: 12px; width: 263px; padding-left: 31px; text-align: left; }
.weather-text { display: grid; padding-top: 3px; }
.dim { color: #cfcfcf; }

.apps { display: flex; align-items: center; }

.apps button {
  position: relative;
  display: grid;
  place-items: center;
  width: 60px;
  height: 60px;
  margin: 2px 3px 0;
  border-radius: 6px;
}

.apps svg { width: 36px; height: 36px; }

.open::after, .current::after {
  content: "";
  position: absolute;
  bottom: 1px;
  left: 50%;
  width: 10px;
  height: 5px;
  margin-left: -5px;
  border-radius: 3px;
  background: #9a9a9a;
}

.apps .current { background: #2f2f2f; border: 1px solid #3a3a3a; }
.current::after { width: 24px; margin-left: -12px; background: #4cc2ff; bottom: 0; }

.alert::after {
  content: "";
  position: absolute;
  top: 5px;
  right: 4px;
  width: 24px;
  height: 24px;
  border-radius: 50%;
  background: #ffb90a;
}

.ubuntu-text { fill: #fff; font-size: 5px; }
.cmd-text { fill: #fff; font: 7px "Liberation Mono", monospace; }

.divider { width: 2px; height: 36px; margin: 0 -1px; background: #a0a0a0; }

.tray { display: flex; align-items: center; margin-left: auto; padding-right: 22px; }
.tray button { display: grid; place-items: center; width: 36px; }
.tray .lang { width: 66px; margin-right: 6px; }
.tray .clock { width: 110px; justify-items: end; font-size: 18px; }
```
